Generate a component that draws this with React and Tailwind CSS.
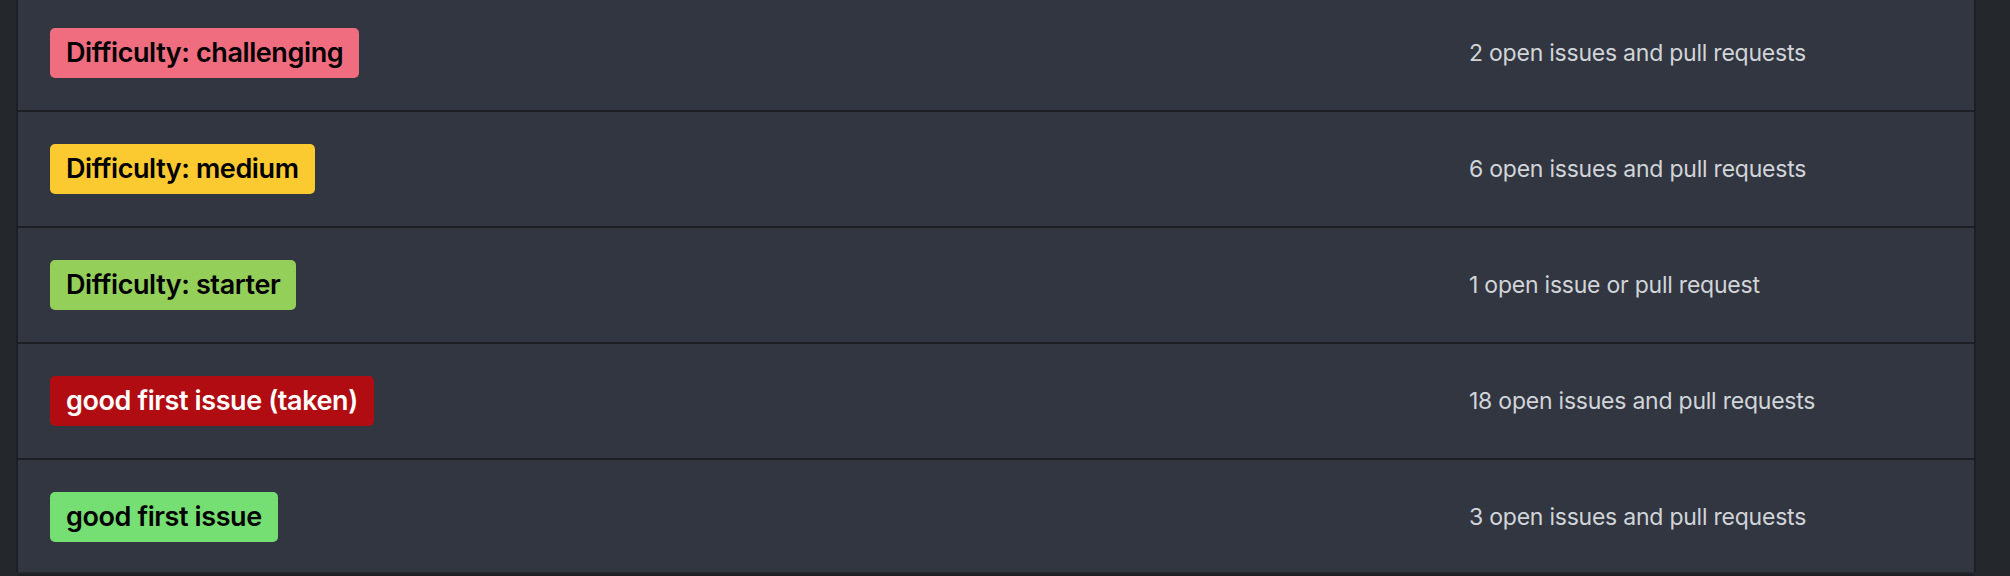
import React from 'react';

const labels = [
  { name: 'Difficulty: challenging', bg: 'bg-[#f06c7f]', fg: 'text-black', count: '2 open issues and pull requests' },
  { name: 'Difficulty: medium', bg: 'bg-[#fbca30]', fg: 'text-black', count: '6 open issues and pull requests' },
  { name: 'Difficulty: starter', bg: 'bg-[#94cf5a]', fg: 'text-black', count: '1 open issue or pull request' },
  { name: 'good first issue (taken)', bg: 'bg-[#b10c12]', fg: 'text-white', count: '18 open issues and pull requests' },
  { name: 'good first issue', bg: 'bg-[#76df74]', fg: 'text-black', count: '3 open issues and pull requests' },
];

function LabelRow({ name, bg, fg, count, first }) {
  return (
    <div
      className={`flex items-center h-[116px] border-b-2 border-[#1d1f25] ${first ? 'mt-[-4px]' : ''}`}
    >
      <div className="flex-none w-[1451px] pl-[32px]">
        <span
          className={`inline-flex items-center h-[50px] px-[16px] rounded-[5px] text-[27px] font-semibold tracking-[-0.015em] ${bg} ${fg}`}
        >
          {name}
        </span>
      </div>
      <div className="text-[23px] tracking-[-0.01em] text-[#d1d5da]">{count}</div>
    </div>
  );
}

export default function App() {
  return (
    <div className="w-[2010px] h-[576px] overflow-hidden bg-[#24282c] font-['Inter',sans-serif]">
      <div className="ml-[16px] w-[1960px] h-[576px] border-x-2 border-[#1d1f25] bg-[#323640]">
        {labels.map((l, idx) => (
          <LabelRow key={idx} {...l} first={idx === 0} />
        ))}
      </div>
    </div>
  );
}
